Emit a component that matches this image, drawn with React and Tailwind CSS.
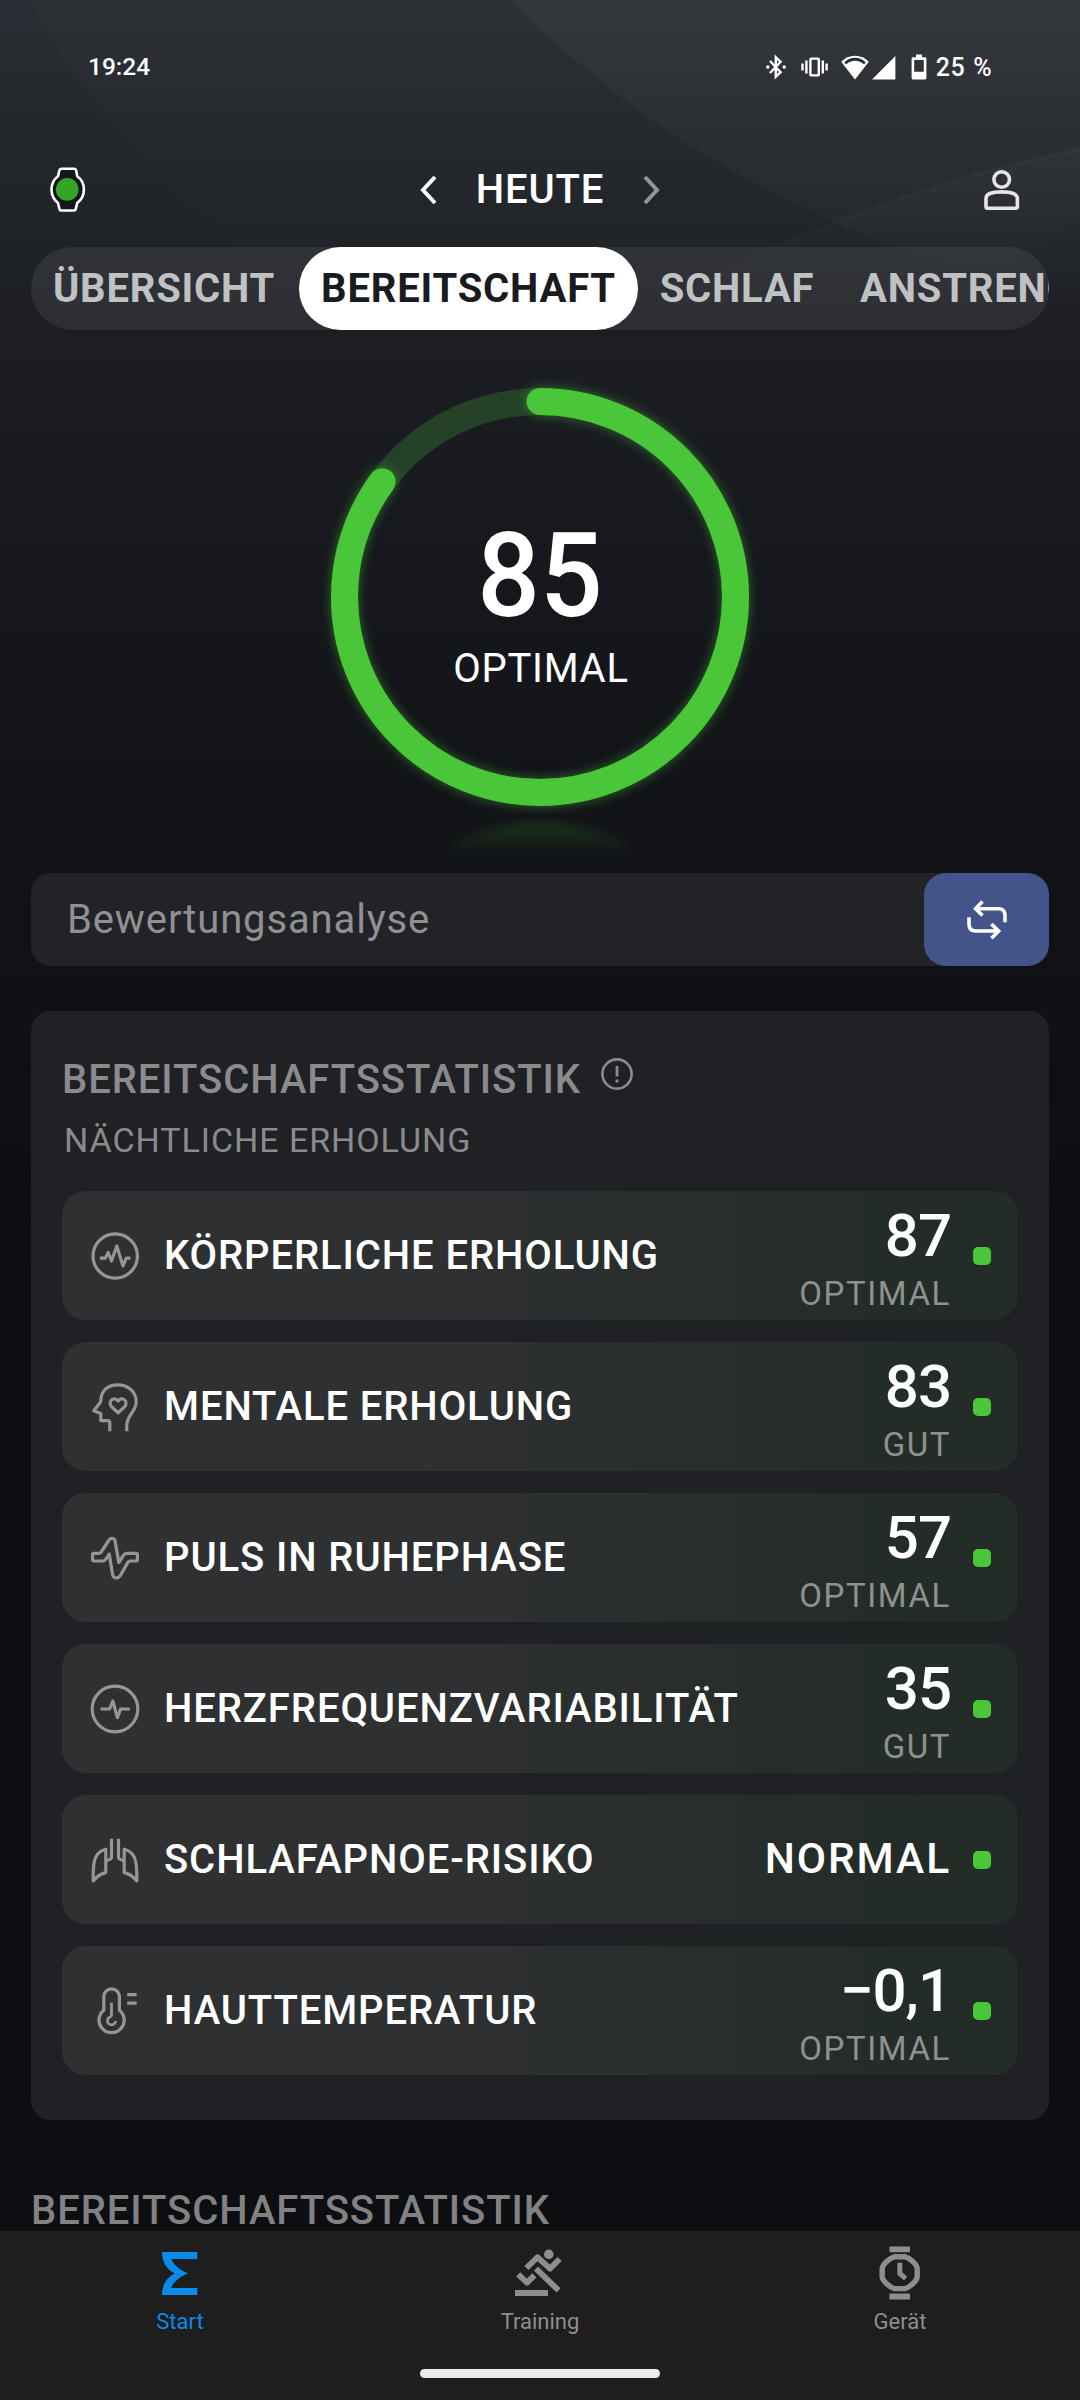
import React from 'react';

const GREEN = '#4ac639';

const iconProps = {
  width: 50,
  height: 50,
  viewBox: '0 0 50 50',
  fill: 'none',
  stroke: '#959697',
  strokeWidth: 3.2,
  strokeLinejoin: 'round',
};

const BodyIcon = () => (
  <svg {...iconProps}>
    <circle cx="25.2" cy="25" r="22.2" />
    <path d="M9.8 27.2H15.2L18.2 21.5L21.5 30L26.8 15L33 35L36.2 27.2H40.5" />
  </svg>
);

const MindIcon = () => (
  <svg {...iconProps}>
    <path d="M19.8 49.2V40.5Q19.8 38.6 18 38.6H10.8V31.4L3.8 28.8L10 20.8Q10.8 19.6 10.8 18C11.2 8.5 18 2.8 27.6 2.8C38.4 2.8 46.2 10 46.2 19.7C46.2 29.5 36.8 33.4 36.8 43V49.2" />
    <path d="M28.1 30.8L21.6 24.8C19.6 22.8 19.7 19.4 21.6 17.9C23.8 16 26.5 16.6 28.1 19C29.7 16.6 32.4 16 34.6 17.9C36.5 19.4 36.6 22.8 34.6 24.8Z" />
  </svg>
);

const PulseIcon = () => (
  <svg {...iconProps}>
    <path d="M3.8 20.4H8.5Q10.2 20.4 11.2 19L18.4 8Q20 5.3 22 5.3Q24.6 5.3 25.1 8L28.8 29.6L33.4 22.3Q34.6 20.4 36.5 20.4H46.2Q47.4 20.4 47.4 21.6V26.8Q47.4 28 46.2 28H40.5Q38.8 28 37.8 29.4L30.6 42.2Q28.8 45 26.6 45Q23.2 45 22.6 41.5L19.2 21L16 26Q14.8 28 12.8 28H3.8Q2.6 28 2.6 26.8V21.6Q2.6 20.4 3.8 20.4Z" />
  </svg>
);

const HrvIcon = () => (
  <svg {...iconProps}>
    <circle cx="25" cy="25" r="22.8" />
    <path d="M10.5 25H19.6L22.8 17L27.4 33.6L30.6 25H39.8" />
  </svg>
);

const LungsIcon = () => (
  <svg {...iconProps}>
    <path d="M15.6 14.2C8.5 16 5.2 20 4 28C3 35 3.2 40 3.2 46C6.5 42 10 38.6 15.8 37.6V14.2Z" />
    <path d="M34.4 14.2C41.5 16 44.8 20 46 28C47 35 46.8 40 46.8 46C43.5 42 40 38.6 34.2 37.6V14.2Z" />
    <path d="M21.5 3.8V22Q21.5 24.4 16 25.8" />
    <path d="M28.5 3.8V22Q28.5 24.4 34 25.8" />
  </svg>
);

const ThermometerIcon = () => (
  <svg {...iconProps}>
    <path d="M13.8 10.6A7.8 7.8 0 0 1 29.4 10.6V24.2A12.6 12.6 0 1 1 13.8 24.2Z" />
    <path d="M21.5 16.8V30.6M21.5 30.6A4.1 4.1 0 1 0 25.7 35" strokeWidth="2.8" />
    <path d="M37.2 8.6H46.6M37.2 17.2H46.6" />
  </svg>
);

const stats = [
  { id: 'body', icon: BodyIcon, label: 'KÖRPERLICHE ERHOLUNG', value: '87', rating: 'OPTIMAL' },
  { id: 'mind', icon: MindIcon, label: 'MENTALE ERHOLUNG', value: '83', rating: 'GUT' },
  { id: 'pulse', icon: PulseIcon, label: 'PULS IN RUHEPHASE', value: '57', rating: 'OPTIMAL' },
  { id: 'hrv', icon: HrvIcon, label: 'HERZFREQUENZVARIABILITÄT', value: '35', rating: 'GUT' },
  { id: 'apnea', icon: LungsIcon, label: 'SCHLAFAPNOE-RISIKO', rating: 'NORMAL' },
  { id: 'temp', icon: ThermometerIcon, label: 'HAUTTEMPERATUR', value: '−0,1', rating: 'OPTIMAL' },
];

const Backdrop = () => (
  <svg className="absolute left-0 top-0" width="1080" height="600" viewBox="0 0 1080 600" fill="none">
    <defs>
      <linearGradient id="arcFade" gradientUnits="userSpaceOnUse" x1="0" y1="0" x2="0" y2="320">
        <stop offset="0" stopColor="#fff" stopOpacity="0.036" />
        <stop offset="0.6" stopColor="#fff" stopOpacity="0.022" />
        <stop offset="1" stopColor="#fff" stopOpacity="0" />
      </linearGradient>
      <linearGradient id="sweepFade" gradientUnits="userSpaceOnUse" x1="0" y1="140" x2="0" y2="330">
        <stop offset="0" stopColor="#fff" stopOpacity="0.024" />
        <stop offset="1" stopColor="#fff" stopOpacity="0" />
      </linearGradient>
    </defs>
    <circle cx="640" cy="-310" r="684" fill="url(#arcFade)" fillOpacity="0.4" />
    <circle cx="1247" cy="-726" r="1034" fill="url(#arcFade)" />
    <circle cx="1371" cy="1570" r="1450" fill="url(#sweepFade)" stroke="url(#sweepFade)" strokeWidth="4" />
  </svg>
);

const StatusBar = () => (
  <div className="flex h-[134px] items-center justify-between px-[88px] text-[24.5px] font-medium leading-none">
    <span>19:24</span>
    <div className="flex items-center">
      <svg width="20" height="26" viewBox="0 0 20 26" fill="none" stroke="#fff" strokeWidth="2.4">
        <path d="M4 7L14.6 18.2L9.8 22.8V3.2L14.6 7.8L4 19" />
        <circle cx="1.8" cy="13" r="1.7" fill="#fff" stroke="none" />
        <circle cx="18.2" cy="13" r="1.7" fill="#fff" stroke="none" />
      </svg>
      <svg className="ml-[15px]" width="27" height="20" viewBox="0 0 27 20" fill="none" stroke="#fff" strokeWidth="2.4">
        <rect x="9.4" y="1.6" width="8.4" height="16.8" rx="1" />
        <path d="M5.4 3.5V16.5M21.8 3.5V16.5" />
        <path d="M1.5 6.5V13.5M25.6 6.5V13.5" />
      </svg>
      <svg className="ml-[13px]" width="28" height="25" viewBox="0 0 28 25">
        <path d="M14 24.4L0.2 6.8C7.8 -1.4 20.2 -1.4 27.8 6.8Z" fill="#fff" />
        <path d="M3.4 7.2C9.6 1.4 18.4 1.4 24.6 7.2L23 9.4C17.8 4.6 10.2 4.6 5 9.4Z" fill="#2b2d32" />
      </svg>
      <svg className="ml-[3px]" width="24" height="25" viewBox="0 0 24 25">
        <path d="M23.4 1V24.4H0Z" fill="#fff" />
      </svg>
      <svg className="ml-[15px]" width="16" height="26" viewBox="0 0 16 26">
        <path fill="#fff" fillRule="evenodd" d="M5 0.6H11V3.2H14Q15.4 3.2 15.4 4.6V24Q15.4 25.4 14 25.4H2Q0.6 25.4 0.6 24V4.6Q0.6 3.2 2 3.2H5ZM3.2 6V17.8H12.8V6Z" />
      </svg>
      <span className="ml-[9px] text-[25px] tracking-[0.4px] [word-spacing:1.5px]">25 %</span>
    </div>
  </div>
);

const Header = () => (
  <div className="flex h-[111px] items-center justify-between pl-[50px] pr-[60px]">
    <svg width="36" height="46" viewBox="0 0 36 46" fill="none">
      <path
        d="M9.4 3.2Q9.7 1.7 11.2 1.7H24.3Q25.8 1.7 26.1 3.2L27.2 9.2C31.8 12.4 33.9 17 33.9 22.4S31.8 32.4 27.2 36L25.8 42Q25.5 43.5 24 43.5H11.2Q9.7 43.5 9.4 42L8 36C3.6 32.4 1.5 27.8 1.5 22.4S3.6 12.4 8 9.2Z"
        fill="#15171c"
        stroke="#fff"
        strokeWidth="2.6"
      />
      <circle cx="17.2" cy="22.4" r="11.3" fill="#35a529" />
    </svg>
    <div className="flex items-center pl-[10px]">
      <svg width="17" height="30" viewBox="0 0 17 30" fill="none" stroke="#fff" strokeWidth="4">
        <path d="M15 2L3 15L15 28" />
      </svg>
      <h1 className="ml-[38.5px] mr-[38.5px] text-[40px] font-medium leading-none tracking-[0.9px]">HEUTE</h1>
      <svg width="17" height="30" viewBox="0 0 17 30" fill="none" stroke="#939497" strokeWidth="4">
        <path d="M2 2L14 15L2 28" />
      </svg>
    </div>
    <svg width="36" height="42" viewBox="0 0 36 42" fill="none" stroke="#e6e6e7" strokeWidth="3.6">
      <circle cx="17.7" cy="10.5" r="7.8" />
      <path d="M2 29.5C2 25 8 22.9 17.7 22.9S33.4 25 33.4 29.5V37.4Q33.4 39.2 31.6 39.2H3.8Q2 39.2 2 37.4Z" />
    </svg>
  </div>
);

const Tabs = () => (
  <div className="mx-[31px] mt-[2px] h-[83px] rounded-full bg-white/[0.07]">
    <div className="flex h-full overflow-hidden text-[40px] font-bold leading-none tracking-[0.8px] text-[#c0c1c3]">
      <div className="flex w-[268px] shrink-0 items-center justify-center pr-[2px]">ÜBERSICHT</div>
      <div className="flex w-[339px] shrink-0 items-center justify-center rounded-full bg-white text-[#191b21]">BEREITSCHAFT</div>
      <div className="flex w-[200px] shrink-0 items-center justify-center pr-[2px]">SCHLAF</div>
      <div className="flex shrink-0 items-center pl-[22px]">ANSTRENGUNG</div>
    </div>
  </div>
);

const ScoreRing = ({ score, rating }) => {
  const radius = 195.5;
  const length = 2 * Math.PI * radius;
  return (
    <div className="grid h-[543px] justify-center">
      <svg className="col-start-1 row-start-1" width="480" height="543" viewBox="0 0 480 543" fill="none">
        <defs>
          <filter id="glow" x="-20%" y="-20%" width="140%" height="140%">
            <feGaussianBlur stdDeviation="5.5" />
          </filter>
          <filter id="soft" x="-20%" y="-20%" width="140%" height="140%">
            <feGaussianBlur stdDeviation="4" />
          </filter>
          <linearGradient id="reflectFade" gradientUnits="userSpaceOnUse" x1="0" y1="490" x2="0" y2="524">
            <stop offset="0" stopColor={GREEN} stopOpacity="0.18" />
            <stop offset="1" stopColor={GREEN} stopOpacity="0" />
          </linearGradient>
        </defs>
        <circle cx="240" cy="267" r={radius} stroke="#254128" strokeWidth="27" />
        <g transform="rotate(-90 240 267)" strokeLinecap="round" strokeDasharray={`${(length * score) / 100} ${length}`}>
          <circle cx="240" cy="267" r={radius} stroke={GREEN} strokeWidth="27" filter="url(#glow)" opacity="0.5" />
          <circle cx="240" cy="267" r={radius} stroke={GREEN} strokeWidth="27" />
        </g>
        <circle cx="240" cy="678" r="172" stroke="url(#reflectFade)" strokeWidth="28" filter="url(#soft)" />
      </svg>
      <div className="col-start-1 row-start-1 flex flex-col items-center pt-[188px]">
        <span className="scale-x-[0.95] text-[116px] font-medium leading-none">{score}</span>
        <span className="mt-[15px] pl-[2px] text-[40px] leading-none tracking-[0.7px]">{rating}</span>
      </div>
    </div>
  );
};

const AnalysisBar = () => (
  <div className="mx-[31px] flex h-[93px] items-center justify-between rounded-[20px] bg-[#222326] pl-[36px]">
    <span className="text-[40px] leading-none tracking-[0.87px] text-[#919194]">Bewertungsanalyse</span>
    <button className="flex h-full w-[125px] items-center justify-center rounded-[22px] bg-[#43548b]">
      <svg width="42" height="42" viewBox="0 0 42 42" fill="none" stroke="#fff" strokeWidth="3.6">
        <path d="M16.5 2.6L9.6 9.7L16.5 16.6" />
        <path d="M9.6 9.7H32.5Q39 9.7 39 16.4V23.3" />
        <path d="M25.4 25L32.6 32L25.4 39.2" />
        <path d="M3 18.3V25Q3 32 9.8 32H32.6" />
      </svg>
    </button>
  </div>
);

const StatRow = ({ item }) => {
  const Icon = item.icon;
  return (
    <div className="flex h-[129px] items-center rounded-[24px] bg-linear-to-r from-[#2f3032] from-38% to-[#232c27] to-90% pl-[28px] pr-[27px]">
      <Icon />
      <span className="ml-[24px] flex-1 whitespace-nowrap text-[40px] font-medium leading-none tracking-[0.9px]">{item.label}</span>
      {item.value ? (
        <div className="flex flex-col items-end pt-[5px]">
          <span className="text-[60px] font-medium leading-none tracking-[-1px]">{item.value}</span>
          <span className="mt-[11px] text-[33px] leading-none tracking-[1.6px] text-[#8d9290]">{item.rating}</span>
        </div>
      ) : (
        <span className="text-[42.5px] font-medium leading-none tracking-[1.9px]">{item.rating}</span>
      )}
      <div className="ml-[22px] size-[18px] rounded-[5px] bg-[#4ac639]" />
    </div>
  );
};

const StatsCard = () => (
  <div className="mx-[31px] mt-[45px] h-[1109px] rounded-[20px] bg-[#202124] px-[31px] pt-[49px]">
    <div className="flex items-start text-[#8b8b8e]">
      <h2 className="text-[40px] font-medium leading-none tracking-[0.93px]">BEREITSCHAFTSSTATISTIK</h2>
      <svg className="-mt-[2px] ml-[19px]" width="34" height="34" viewBox="0 0 34 34" fill="none" stroke="#8b8b8e" strokeWidth="2.6">
        <circle cx="17" cy="16" r="14.6" />
        <path d="M17 8V18.6M17 21.6V24.6" strokeWidth="2.8" />
      </svg>
    </div>
    <p className="mt-[23px] pl-[2px] text-[34px] leading-none tracking-[0.95px] text-[#8b8b8e]">NÄCHTLICHE ERHOLUNG</p>
    <div className="mt-[34px] flex flex-col gap-[22px]">
      {stats.map((item) => (
        <StatRow key={item.id} item={item} />
      ))}
    </div>
  </div>
);

const BottomNav = () => (
  <nav className="relative h-[169px] bg-[#1e1e1e] text-[22px] leading-none text-[#8e8e8e]">
    <div className="grid grid-cols-3">
      <div className="flex flex-col items-center pt-[15px] text-[#0a8be8]">
        <div className="flex h-[54px] items-center">
          <svg width="36" height="43" viewBox="0 0 36 43" fill="#0a8be8">
            <path d="M0 0H35.3V7H9.3C11.5 12.6 17 17.6 25.8 21.2V21.6C17 25.2 11.5 30.2 9.3 36H35.3V43H0C0.2 32 5 25.4 12.6 21.4C5 17.4 0.2 11 0 0Z" />
          </svg>
        </div>
        <span className="mt-[10.5px]">Start</span>
      </div>
      <div className="flex flex-col items-center pt-[15px]">
        <div className="mr-[4px] flex h-[54px] items-center">
          <svg width="47" height="48" viewBox="0 0 47 48" fill="none" stroke="#8e8e8e" strokeWidth="5.8">
            <circle cx="33.8" cy="5.4" r="4.8" fill="#8e8e8e" stroke="none" />
            <path d="M11.4 19L22.4 8.2L35 19.6L44.6 10" strokeLinejoin="round" />
            <path d="M21 19.6L43.6 41.4" />
            <path d="M3.2 25.4L12 33.6L19.4 26.4" strokeLinejoin="round" />
            <path d="M0 44H33" />
          </svg>
        </div>
        <span className="mt-[10.5px]">Training</span>
      </div>
      <div className="flex flex-col items-center pt-[15px]">
        <svg width="42" height="54" viewBox="0 0 42 54" fill="none">
          <path d="M10.5 0.6H31V6.2H10.5ZM10.5 47.6H31V53.4H10.5Z" fill="#8e8e8e" />
          <path d="M15.5 10.8H26.1C30.5 11.8 38.2 18.4 38.2 22.8V30.4C38.2 34.8 30.5 41.6 26.1 42.6H15.5C11.1 41.6 3.2 34.8 3.2 30.4V22.8C3.2 18.4 11.1 11.8 15.5 10.8Z" stroke="#8e8e8e" strokeWidth="5.4" />
          <path d="M20.8 16.8V27.4L26.6 32.6" stroke="#8e8e8e" strokeWidth="5" />
        </svg>
        <span className="mt-[10.5px]">Gerät</span>
      </div>
    </div>
    <div className="mx-auto mt-[36.5px] h-[9px] w-[240px] rounded-full bg-[#ececec]" />
  </nav>
);

export default function App() {
  return (
    <div className="relative flex h-[2400px] w-[1080px] flex-col overflow-hidden bg-[#0d0e12] bg-[linear-gradient(180deg,#2a2d33_0px,#22262b_170px,#1c1e23_340px,#15171c_600px,#121317_860px,#0e0f13_1180px,#0d0e12_1500px)] font-['Roboto',sans-serif] text-white">
      <Backdrop />
      <div className="relative h-[2231px]">
        <StatusBar />
        <Header />
        <Tabs />
        <ScoreRing score={85} rating="OPTIMAL" />
        <AnalysisBar />
        <StatsCard />
        <h2 className="mt-[71px] pl-[31px] text-[40px] font-medium leading-none tracking-[0.93px] text-[#828283]">BEREITSCHAFTSSTATISTIK</h2>
      </div>
      <BottomNav />
    </div>
  );
}
